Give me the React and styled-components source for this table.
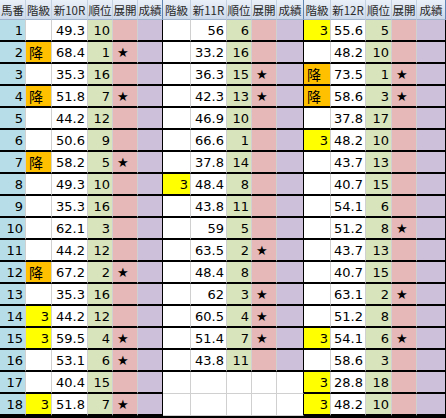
import styled, { createGlobalStyle, css } from 'styled-components';

const GlobalStyle = createGlobalStyle`
    html, body { margin: 0; padding: 0; background: #ffffff; }
    body { font-family: "DejaVu Sans", "Noto Sans CJK JP", sans-serif; }
`;

/* column widths: 馬番, then three blocks of 階級/新R/順位/展開/成績 */
const COLS = '26px 26px 36px 25px 25px 25px 28px 36px 25px 25px 27px 27px 35px 26px 25px 29px';

const BG = {
    num: '#b7dee8',
    blank: '#ffffff',
    down: '#ffc000',
    up: '#ffff00',
    rank: '#d8e4bc',
    dev: '#e6b8b7',
    res: '#ccc0da',
};

const races = ['新10R', '新11R', '新12R'];

// [階級, 指数, 順位, 展開★]
const rows = [
    [['', '49.3', 10, 0], ['', '56', 6, 0], ['3', '55.6', 5, 0]],
    [['降', '68.4', 1, 1], ['', '33.2', 16, 0], ['', '48.2', 10, 0]],
    [['', '35.3', 16, 0], ['', '36.3', 15, 1], ['降', '73.5', 1, 1]],
    [['降', '51.8', 7, 1], ['', '42.3', 13, 1], ['降', '58.6', 3, 1]],
    [['', '44.2', 12, 0], ['', '46.9', 10, 0], ['', '37.8', 17, 0]],
    [['', '50.6', 9, 0], ['', '66.6', 1, 0], ['3', '48.2', 10, 0]],
    [['降', '58.2', 5, 1], ['', '37.8', 14, 0], ['', '43.7', 13, 0]],
    [['', '49.3', 10, 0], ['3', '48.4', 8, 0], ['', '40.7', 15, 0]],
    [['', '35.3', 16, 0], ['', '43.8', 11, 0], ['', '54.1', 6, 0]],
    [['', '62.1', 3, 0], ['', '59', 5, 0], ['', '51.2', 8, 1]],
    [['', '44.2', 12, 0], ['', '63.5', 2, 1], ['', '43.7', 13, 0]],
    [['降', '67.2', 2, 1], ['', '48.4', 8, 0], ['', '40.7', 15, 0]],
    [['', '35.3', 16, 0], ['', '62', 3, 1], ['', '63.1', 2, 1]],
    [['3', '44.2', 12, 0], ['', '60.5', 4, 1], ['', '51.2', 8, 0]],
    [['3', '59.5', 4, 1], ['', '51.4', 7, 1], ['3', '54.1', 6, 1]],
    [['', '53.1', 6, 1], ['', '43.8', 11, 0], ['', '58.6', 3, 0]],
    [['', '40.4', 15, 0], null, ['3', '28.8', 18, 0]],
    [['3', '51.8', 7, 1], null, ['3', '48.2', 10, 0]],
];

const App = () => {
    return (
        <>
            <GlobalStyle />
            <Sheet>
                <Head>馬番</Head>
                {races.map((race) => (
                    <Block key={race}>
                        <Head>階級</Head>
                        <Head>{race}</Head>
                        <Head>順位</Head>
                        <Head>展開</Head>
                        <Head $end>成績</Head>
                    </Block>
                ))}

                {rows.map((row, i) => (
                    <Block key={i}>
                        <Cell $bg="num" $align="right">{i + 1}</Cell>
                        {row.map((b, j) =>
                            b ? (
                                <Block key={j}>
                                    <Cell
                                        $bg={b[0] === '降' ? 'down' : b[0] === '3' ? 'up' : 'blank'}
                                        $align={b[0] === '降' ? 'left' : 'right'}
                                        $jp={b[0] === '降'}
                                    >
                                        {b[0]}
                                    </Cell>
                                    <Cell $bg="blank" $align="right">{b[1]}</Cell>
                                    <Cell $bg="rank" $align="right">{b[2]}</Cell>
                                    <Cell $bg="dev" $align="left">{b[3] ? <Star>★</Star> : ''}</Cell>
                                    <Cell $bg="res" $end />
                                </Block>
                            ) : (
                                <Block key={j}>
                                    <Cell $empty />
                                    <Cell $empty />
                                    <Cell $empty />
                                    <Cell $empty />
                                    <Cell $empty $end />
                                </Block>
                            )
                        )}
                    </Block>
                ))}
            </Sheet>
        </>
    );
};

export default App;

const Sheet = styled.div`
    display: grid;
    grid-template-columns: ${COLS};
    width: 446px;
    overflow: hidden;
    border-bottom: 2px solid #000;
`;

const Block = styled.div`
    display: contents;
`;

const Head = styled.div`
    height: 20px;
    box-sizing: border-box;
    display: flex;
    align-items: center;
    justify-content: center;
    white-space: nowrap;
    overflow: hidden;
    font-family: "Noto Sans CJK JP", sans-serif;
    font-size: 11.5px;
    color: #2a2a2a;
    background: linear-gradient(#eaf0f8, #cdd9ea);
    border-bottom: 1px solid #9fb4cc;
    border-right: 1px solid ${(p) => (p.$end ? '#5f86b3' : '#c4d1e1')};
`;

const Cell = styled.div`
    height: 22px;
    box-sizing: border-box;
    display: flex;
    align-items: center;
    justify-content: ${(p) => (p.$align === 'left' ? 'flex-start' : 'flex-end')};
    padding: ${(p) => (p.$align === 'left' ? '0 0 0 3px' : '0 2px 0 0')};
    font-size: 13px;
    color: #000;
    white-space: nowrap;
    background: ${(p) => BG[p.$bg] || '#fff'};
    border-bottom: 2px solid #000;
    border-right: 1px solid ${(p) => (p.$end ? '#000' : '#d0d0d0')};
    ${(p) => p.$jp && css`
        font-family: "Noto Sans CJK JP", sans-serif;
        font-size: 14px;
    `}
    ${(p) => p.$empty && css`
        border-bottom: 1px solid #d0d0d0;
    `}
`;

const Star = styled.span`
    font-size: 13px;
    line-height: 1;
    padding-left: 1px;
`;
